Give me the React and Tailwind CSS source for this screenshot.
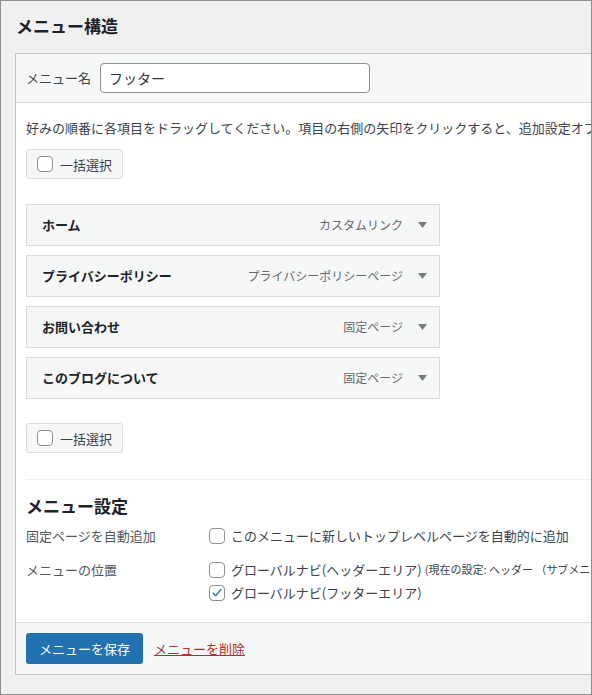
import React from "react";

const font = { fontFamily: '"Noto Sans CJK JP", "Noto Sans", sans-serif' };

function Box({ checked }) {
  return (
    <span className="inline-flex w-4 h-4 shrink-0 items-center justify-center rounded-[4px] border border-[#8c8f94] bg-white">
      {checked && (
        <svg width="14" height="14" viewBox="0 0 20 20">
          <path d="M4.5 10.5 L8.2 14 L15.5 5" fill="none" stroke="#3582c4" strokeWidth="2.2" strokeLinecap="round" strokeLinejoin="round" />
        </svg>
      )}
    </span>
  );
}

function BulkButton() {
  return (
    <div className="flex items-center gap-[7px] w-[97px] h-[30px] pl-[10px] rounded-[3px] border border-[#dcdcde] bg-[#f6f7f7] text-[13px] text-[#3c434a]">
      <Box />
      <span className="leading-none">一括選択</span>
    </div>
  );
}

function Item({ title, type }) {
  return (
    <div className="flex items-center w-[414px] h-[42px] border border-[#dcdcde] bg-[#f6f7f7] pl-[15px] pr-[12px]">
      <span className="font-bold text-[13px] text-[#1d2327] flex-1">{title}</span>
      <span className="text-[12px] text-[#646970]">{type}</span>
      <svg className="ml-[15px]" width="9" height="6" viewBox="0 0 9 6">
        <path d="M0 0 L9 0 L4.5 6 Z" fill="#787c82" />
      </svg>
    </div>
  );
}

export default function App() {
  return (
    <div style={font} className="w-[592px] h-[695px] border border-[#8f8f8f] bg-[#f0f0f1] overflow-hidden whitespace-nowrap">
      <h2 className="ml-[15px] mt-[13px] text-[17px] leading-[24px] font-bold text-[#1d2327]">メニュー構造</h2>
      <div className="ml-[14px] mt-[15px] w-[700px] border border-[#c3c4c7] bg-white">
        <div className="flex items-center gap-[9px] pl-[10px] pt-[9px] pb-[9px] bg-[#f6f7f7] border-b border-[#dcdcde]">
          <span className="text-[13px] text-[#3c434a]">メニュー名</span>
          <div className="flex items-center w-[270px] h-[30px] rounded-[4px] border border-[#8c8f94] bg-white pl-[8px] text-[14px] text-[#2c3338]">
            フッター
          </div>
        </div>
        <div className="pl-[10px] pt-[15px]">
          <p className="text-[13px] leading-[20px] text-[#3c434a]">
            好みの順番に各項目をドラッグしてください。項目の右側の矢印をクリックすると、追加設定オプションを表示します。
          </p>
          <div className="mt-[11px]">
            <BulkButton />
          </div>
          <div className="mt-[25px] flex flex-col gap-[9px]">
            <Item title="ホーム" type="カスタムリンク" />
            <Item title="プライバシーポリシー" type="プライバシーポリシーページ" />
            <Item title="お問い合わせ" type="固定ページ" />
            <Item title="このブログについて" type="固定ページ" />
          </div>
          <div className="mt-[24px]">
            <BulkButton />
          </div>
          <div className="mt-[26px] border-t border-[#f0f0f1]" />
          <h3 className="mt-[14px] text-[17px] leading-[24px] font-bold text-[#1d2327]">メニュー設定</h3>
          <div className="mt-[6px] grid grid-cols-[183px_1fr] text-[13px] text-[#3c434a]">
            <div className="leading-[23px] text-[#50575e]">固定ページを自動追加</div>
            <div className="flex items-center gap-[6px] h-[23px]">
              <Box />
              <span>このメニューに新しいトップレベルページを自動的に追加</span>
            </div>
            <div className="mt-[11px] leading-[23px] text-[#50575e]">メニューの位置</div>
            <div className="mt-[11px] flex flex-col">
              <div className="flex items-center gap-[6px] h-[23px]">
                <Box />
                <span>グローバルナビ(ヘッダーエリア)</span>
                <span className="text-[11px] -ml-[3px]">(現在の設定: ヘッダー （サブメニューなし）)</span>
              </div>
              <div className="flex items-center gap-[6px] h-[23px]">
                <Box checked />
                <span>グローバルナビ(フッターエリア)</span>
              </div>
            </div>
          </div>
        </div>
        <div className="mt-[18px] flex items-center gap-[11px] pl-[10px] h-[52px] border-t border-[#dcdcde] bg-[#f6f7f7]">
          <div className="flex items-center justify-center w-[117px] h-[31px] rounded-[3px] bg-[#2271b1] text-[13px] text-white">
            メニューを保存
          </div>
          <a className="text-[13px] text-[#b32d2e] underline">メニューを削除</a>
        </div>
      </div>
    </div>
  );
}
